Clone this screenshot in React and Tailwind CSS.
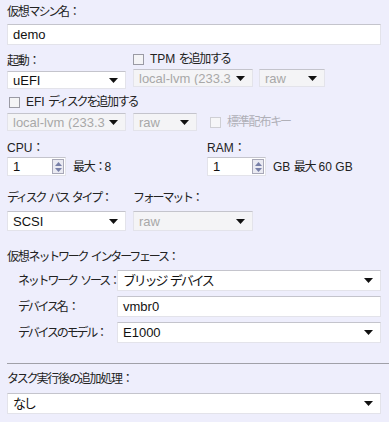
import React from 'react';

const FONT = { fontFamily: '"Liberation Sans", "Noto Sans CJK JP", sans-serif' };

// kana/fullwidth runs and kanji runs get tighter tracking, so they sit as narrow as the original UI font
function T({ children }) {
  const parts = String(children).split(/([\u3000-\u30ff\uff00-\uffef]+|[\u4e00-\u9fff]+)/);
  return (
    <>
      {parts.map((p, i) => {
        if (!(i % 2)) return <span key={i}>{p}</span>;
        const kanji = /[\u4e00-\u9fff]/.test(p);
        return (
          <span key={i} className={kanji ? 'tracking-[-1.2px]' : 'tracking-[-2.2px]'}>{p}</span>
        );
      })}
    </>
  );
}

function Arrow() {
  return (
    <svg width="9" height="5" viewBox="0 0 9 5" className="shrink-0">
      <path d="M0 0H9L4.5 5Z" fill="#111" />
    </svg>
  );
}

function Select({ value, w, disabled }) {
  return (
    <div
      className={`flex items-center h-[18px] pl-[5px] pr-[7px] border border-[#e3e3ea] border-t-[#c4c4cc] ${
        disabled ? 'bg-[#f4f4f6] text-[#a8a8a8]' : 'bg-white text-[#111]'
      } ${w}`}
    >
      <span className="flex-1 overflow-hidden whitespace-nowrap text-[13px] leading-none"><T>{value}</T></span>
      <Arrow />
    </div>
  );
}

function Input({ value, w }) {
  return (
    <div className={`flex items-center h-[21px] pl-[5px] bg-white border border-[#e3e3ea] border-t-[#c4c4cc] ${w}`}>
      <span className="text-[13px] leading-none text-[#111]">{value}</span>
    </div>
  );
}

function Check({ label, disabled }) {
  return (
    <div className="flex items-center gap-[6px] whitespace-nowrap">
      <div className={`w-[11px] h-[11px] border ${disabled ? 'border-[#cfcfd4] bg-[#f6f6f8]' : 'border-[#9a9aa4] bg-[#f4f4f6]'}`} />
      <span className={`text-[12px] leading-none ${disabled ? 'text-[#b0b0b8]' : 'text-[#222]'}`}><T>{label}</T></span>
    </div>
  );
}

function Spinner({ value }) {
  return (
    <div className="flex items-center h-[19px] w-[59px] pl-[5px] pr-[1px] bg-white border border-[#e3e3ea] border-t-[#c4c4cc]">
      <span className="flex-1 text-[13px] leading-none text-[#111]">{value}</span>
      <div className="flex flex-col items-center justify-center gap-[2px] w-[12px] h-[15px] border border-[#a8a8b8] bg-[#eaeaf2]">
        <svg width="7" height="4" viewBox="0 0 7 4"><path d="M0 4H7L3.5 0Z" fill="#7880a8" /></svg>
        <svg width="7" height="4" viewBox="0 0 7 4"><path d="M0 0H7L3.5 4Z" fill="#7880a8" /></svg>
      </div>
    </div>
  );
}

function Label({ children, className = '' }) {
  return (
    <div className={`text-[12px] leading-none text-[#222] whitespace-nowrap ${className}`}>
      <T>{children}</T>
    </div>
  );
}

export default function App() {
  return (
    <div style={FONT} className="w-[389px] h-[422px] overflow-hidden bg-[#eeeefc] pt-[6px]">
      <div className="px-[7px]">
        <Label>仮想マシン名：</Label>
        <div className="mt-[6px]"><Input value="demo" w="w-[374px]" /></div>

        <div className="flex mt-[8px] gap-[7px]">
          <div className="w-[119px]">
            <Label className="mt-[2px]">起動：</Label>
            <div className="mt-[4px]"><Select value="uEFI" w="w-[119px]" /></div>
          </div>
          <div>
            <Check label="TPM を追加する" />
            <div className="flex gap-[6px] mt-[4px]">
              <Select value="local-lvm (233.3" w="w-[120px]" disabled />
              <Select value="raw" w="w-[66px]" disabled />
            </div>
          </div>
        </div>

        <div className="mt-[7px] ml-[2px]"><Check label="EFI ディスクを追加する" /></div>
        <div className="flex items-center mt-[5px] gap-[7px]">
          <Select value="local-lvm (233.3" w="w-[119px]" disabled />
          <Select value="raw" w="w-[64px]" disabled />
          <div className="ml-[6px]"><Check label="標準配布キー" disabled /></div>
        </div>

        <div className="flex mt-[11px]">
          <div className="w-[200px]">
            <Label>CPU：</Label>
            <div className="flex items-center gap-[7px] mt-[3px]">
              <Spinner value="1" />
              <span className="text-[12px] text-[#222]"><T>最大：8</T></span>
            </div>
          </div>
          <div>
            <Label>RAM：</Label>
            <div className="flex items-center gap-[7px] mt-[3px]">
              <Spinner value="1" />
              <span className="text-[12px] text-[#222]"><T>GB 最大 60 GB</T></span>
            </div>
          </div>
        </div>

        <div className="flex mt-[16px] gap-[7px]">
          <div className="w-[119px]">
            <Label>ディスク バス タイプ：</Label>
            <div className="mt-[7px]"><Select value="SCSI" w="w-[119px] h-[20px]" /></div>
          </div>
          <div>
            <Label>フォーマット：</Label>
            <div className="mt-[7px]"><Select value="raw" w="w-[120px] h-[20px]" disabled /></div>
          </div>
        </div>

        <Label className="mt-[20px]">仮想ネットワーク インターフェース：</Label>
        <div className="flex flex-col gap-[5px] mt-[7px]">
          {[
            ['ネットワーク ソース：', 'ブリッジ デバイス', true],
            ['デバイス名：', 'vmbr0', false],
            ['デバイスのモデル：', 'E1000', true],
          ].map(([l, v, sel]) => (
            <div key={l} className="flex items-center">
              <span className="w-[110px] shrink-0 pl-[11px] text-[12px] text-[#222] whitespace-nowrap"><T>{l}</T></span>
              {sel ? <Select value={v} w="w-[264px] h-[21px]" /> : <Input value={v} w="w-[264px]" />}
            </div>
          ))}
        </div>
      </div>

      <div className="ml-[7px] mt-[20px] h-px bg-[#a0a0a8]" />

      <div className="px-[7px]">
        <Label className="mt-[9px]">タスク実行後の追加処理：</Label>
        <div className="mt-[8px]"><Select value="なし" w="w-[374px] h-[21px]" /></div>
      </div>
    </div>
  );
}
